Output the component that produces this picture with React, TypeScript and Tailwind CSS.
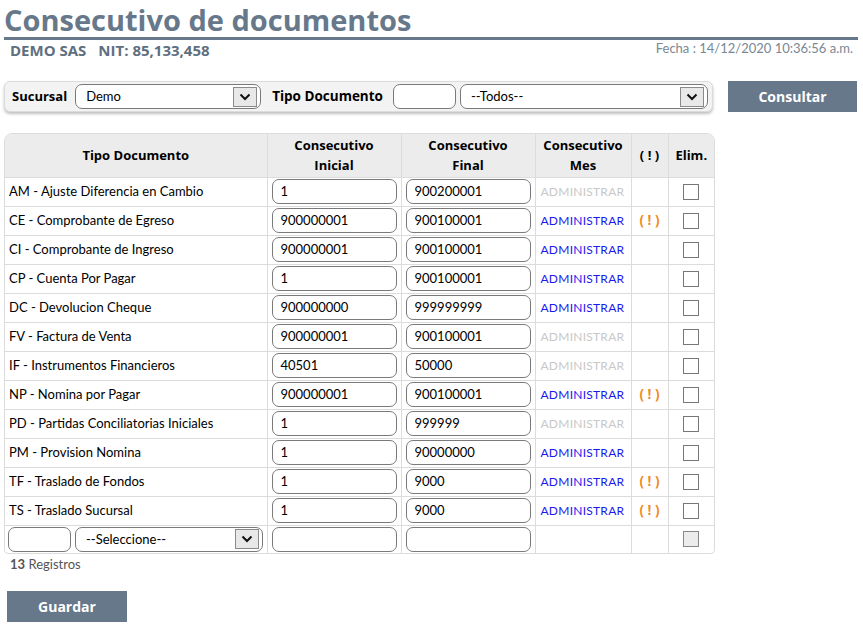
import React from "react";

const rows: { t: string; i: string; f: string; active: boolean; warn: boolean }[] = [
  { t: "AM - Ajuste Diferencia en Cambio", i: "1", f: "900200001", active: false, warn: false },
  { t: "CE - Comprobante de Egreso", i: "900000001", f: "900100001", active: true, warn: true },
  { t: "CI - Comprobante de Ingreso", i: "900000001", f: "900100001", active: true, warn: false },
  { t: "CP - Cuenta Por Pagar", i: "1", f: "900100001", active: true, warn: false },
  { t: "DC - Devolucion Cheque", i: "900000000", f: "999999999", active: true, warn: false },
  { t: "FV - Factura de Venta", i: "900000001", f: "900100001", active: false, warn: false },
  { t: "IF - Instrumentos Financieros", i: "40501", f: "50000", active: false, warn: false },
  { t: "NP - Nomina por Pagar", i: "900000001", f: "900100001", active: true, warn: true },
  { t: "PD - Partidas Conciliatorias Iniciales", i: "1", f: "999999", active: false, warn: false },
  { t: "PM - Provision Nomina", i: "1", f: "90000000", active: true, warn: false },
  { t: "TF - Traslado de Fondos", i: "1", f: "9000", active: true, warn: true },
  { t: "TS - Traslado Sucursal", i: "1", f: "9000", active: true, warn: true },
];

function Chevron() {
  return (
    <svg width="12" height="8" viewBox="0 0 12 8">
      <path d="M1.5 1.5 L6 6 L10.5 1.5" fill="none" stroke="#111" strokeWidth="2" />
    </svg>
  );
}

function Select({ text, w }: { text: string; w: string }) {
  return (
    <div className={`${w} h-[25px] rounded-[7px] border border-[#7a7a7a] bg-white flex items-center pl-[10px] pr-[3px]`}>
      <span className="flex-1 text-[13px] text-black">{text}</span>
      <div className="w-[24px] h-[20px] border border-[#8a8a8a] bg-[#e8e8e8] flex items-center justify-center">
        <Chevron />
      </div>
    </div>
  );
}

function Input({ v, w = "w-[125px]" }: { v: string; w?: string }) {
  return (
    <div className={`${w} h-[25px] rounded-[7px] border border-[#7a7a7a] bg-white flex items-center pl-[8px] text-[13px] text-black`}>
      {v}
    </div>
  );
}

const B = "font-['Open_Sans',sans-serif] font-bold";

export default function App() {
  return (
    <div className="w-[863px] h-[633px] bg-white font-['Lato',sans-serif] text-black overflow-hidden">
      <div className="pl-[4px] pr-[5px]">
        <h1 className={`${B} h-[37px] text-[29px] leading-[40px] text-[#67788a] tracking-[0px] overflow-visible`}>Consecutivo de documentos</h1>
        <div className="h-[3px] bg-[#67788a]" />
        <div className="flex justify-between items-start">
          <div className={`${B} pl-[6px] pt-[0px] text-[15px] leading-[20px] text-[#5f6f80]`}>
            DEMO SAS<span className="ml-[12px]">NIT: 85,133,458</span>
          </div>
          <div className="pr-[5px] text-[13px] leading-[17px] text-[#7a8794]">Fecha : 14/12/2020 10:36:56 a.m.</div>
        </div>
      </div>

      <div className="flex items-center mt-[21px] pl-[4px]">
        <div className="w-[709px] h-[31px] rounded-[6px] border border-[#dcdcdc] bg-[#f3f3f3] shadow-[0_2px_3px_rgba(0,0,0,0.25)] flex items-center pl-[7px]">
          <span className={`${B} text-[13px] mr-[8px]`}>Sucursal</span>
          <Select text="Demo" w="w-[186px]" />
          <span className={`${B} text-[13.5px] ml-[11px] mr-[10px]`}>Tipo Documento</span>
          <Input v="" w="w-[63px]" />
          <div className="ml-[4px]">
            <Select text="--Todos--" w="w-[248px]" />
          </div>
        </div>
        <div className={`${B} ml-[15px] w-[129px] h-[31px] bg-[#67788a] text-white text-[14px] flex items-center justify-center`}>
          Consultar
        </div>
      </div>

      <div className="mt-[21px] ml-[4px] w-[711px] rounded-t-[8px] rounded-b-[4px] border border-[#dcdcdc] overflow-hidden">
        <table className="border-collapse w-full table-fixed">
          <colgroup>
            <col className="w-[262px]" />
            <col className="w-[134px]" />
            <col className="w-[134px]" />
            <col className="w-[96px]" />
            <col className="w-[37px]" />
            <col className="w-[46px]" />
          </colgroup>
          <thead>
            <tr className={`${B} bg-[#ececec] h-[43px] text-[13px] leading-[20px]`}>
              <th className="border-r border-[#dcdcdc]">Tipo Documento</th>
              <th className="border-r border-[#dcdcdc]">Consecutivo<br />Inicial</th>
              <th className="border-r border-[#dcdcdc]">Consecutivo<br />Final</th>
              <th className="border-r border-[#dcdcdc]">Consecutivo<br />Mes</th>
              <th className="border-r border-[#dcdcdc]">( ! )</th>
              <th>Elim.</th>
            </tr>
          </thead>
          <tbody>
            {rows.map((r) => (
              <tr key={r.t} className="h-[29px] border-t border-[#dcdcdc]">
                <td className="border-r border-[#dcdcdc] pl-[4px] text-[13px] align-middle">{r.t}</td>
                <td className="border-r border-[#dcdcdc] pl-[4px] align-middle"><Input v={r.i} /></td>
                <td className="border-r border-[#dcdcdc] pl-[4px] align-middle"><Input v={r.f} /></td>
                <td className={`border-r border-[#dcdcdc] pl-[5px] text-[12px] tracking-[0.25px] align-middle ${r.active ? "text-[#1a1aee]" : "text-[#c8c8c8]"}`}>ADMINISTRAR</td>
                <td className={`${B} border-r border-[#dcdcdc] text-center text-[13.5px] text-[#f08a1e] align-middle`}>{r.warn ? "( ! )" : ""}</td>
                <td className="align-middle">
                  <div className="mx-auto w-[16px] h-[16px] border border-[#777] bg-white" />
                </td>
              </tr>
            ))}
            <tr className="h-[28px] border-t border-[#dcdcdc]">
              <td className="border-r border-[#dcdcdc] pl-[3px]">
                <div className="flex items-center gap-[4px]">
                  <Input v="" w="w-[63px]" />
                  <Select text="--Seleccione--" w="w-[188px]" />
                </div>
              </td>
              <td className="border-r border-[#dcdcdc] pl-[4px]"><Input v="" /></td>
              <td className="border-r border-[#dcdcdc] pl-[4px]"><Input v="" /></td>
              <td className="border-r border-[#dcdcdc]"></td>
              <td className="border-r border-[#dcdcdc]"></td>
              <td>
                <div className="mx-auto w-[16px] h-[16px] border border-[#888] bg-[#ececec]" />
              </td>
            </tr>
          </tbody>
        </table>
      </div>

      <div className="pl-[10px] pt-[1px] text-[13px] text-[#555] leading-[18px]">
        <span className="font-bold">13</span> Registros
      </div>

      <div className={`${B} ml-[7px] mt-[18px] w-[120px] h-[31px] bg-[#67788a] text-white text-[14px] flex items-center justify-center`}>
        Guardar
      </div>
    </div>
  );
}
